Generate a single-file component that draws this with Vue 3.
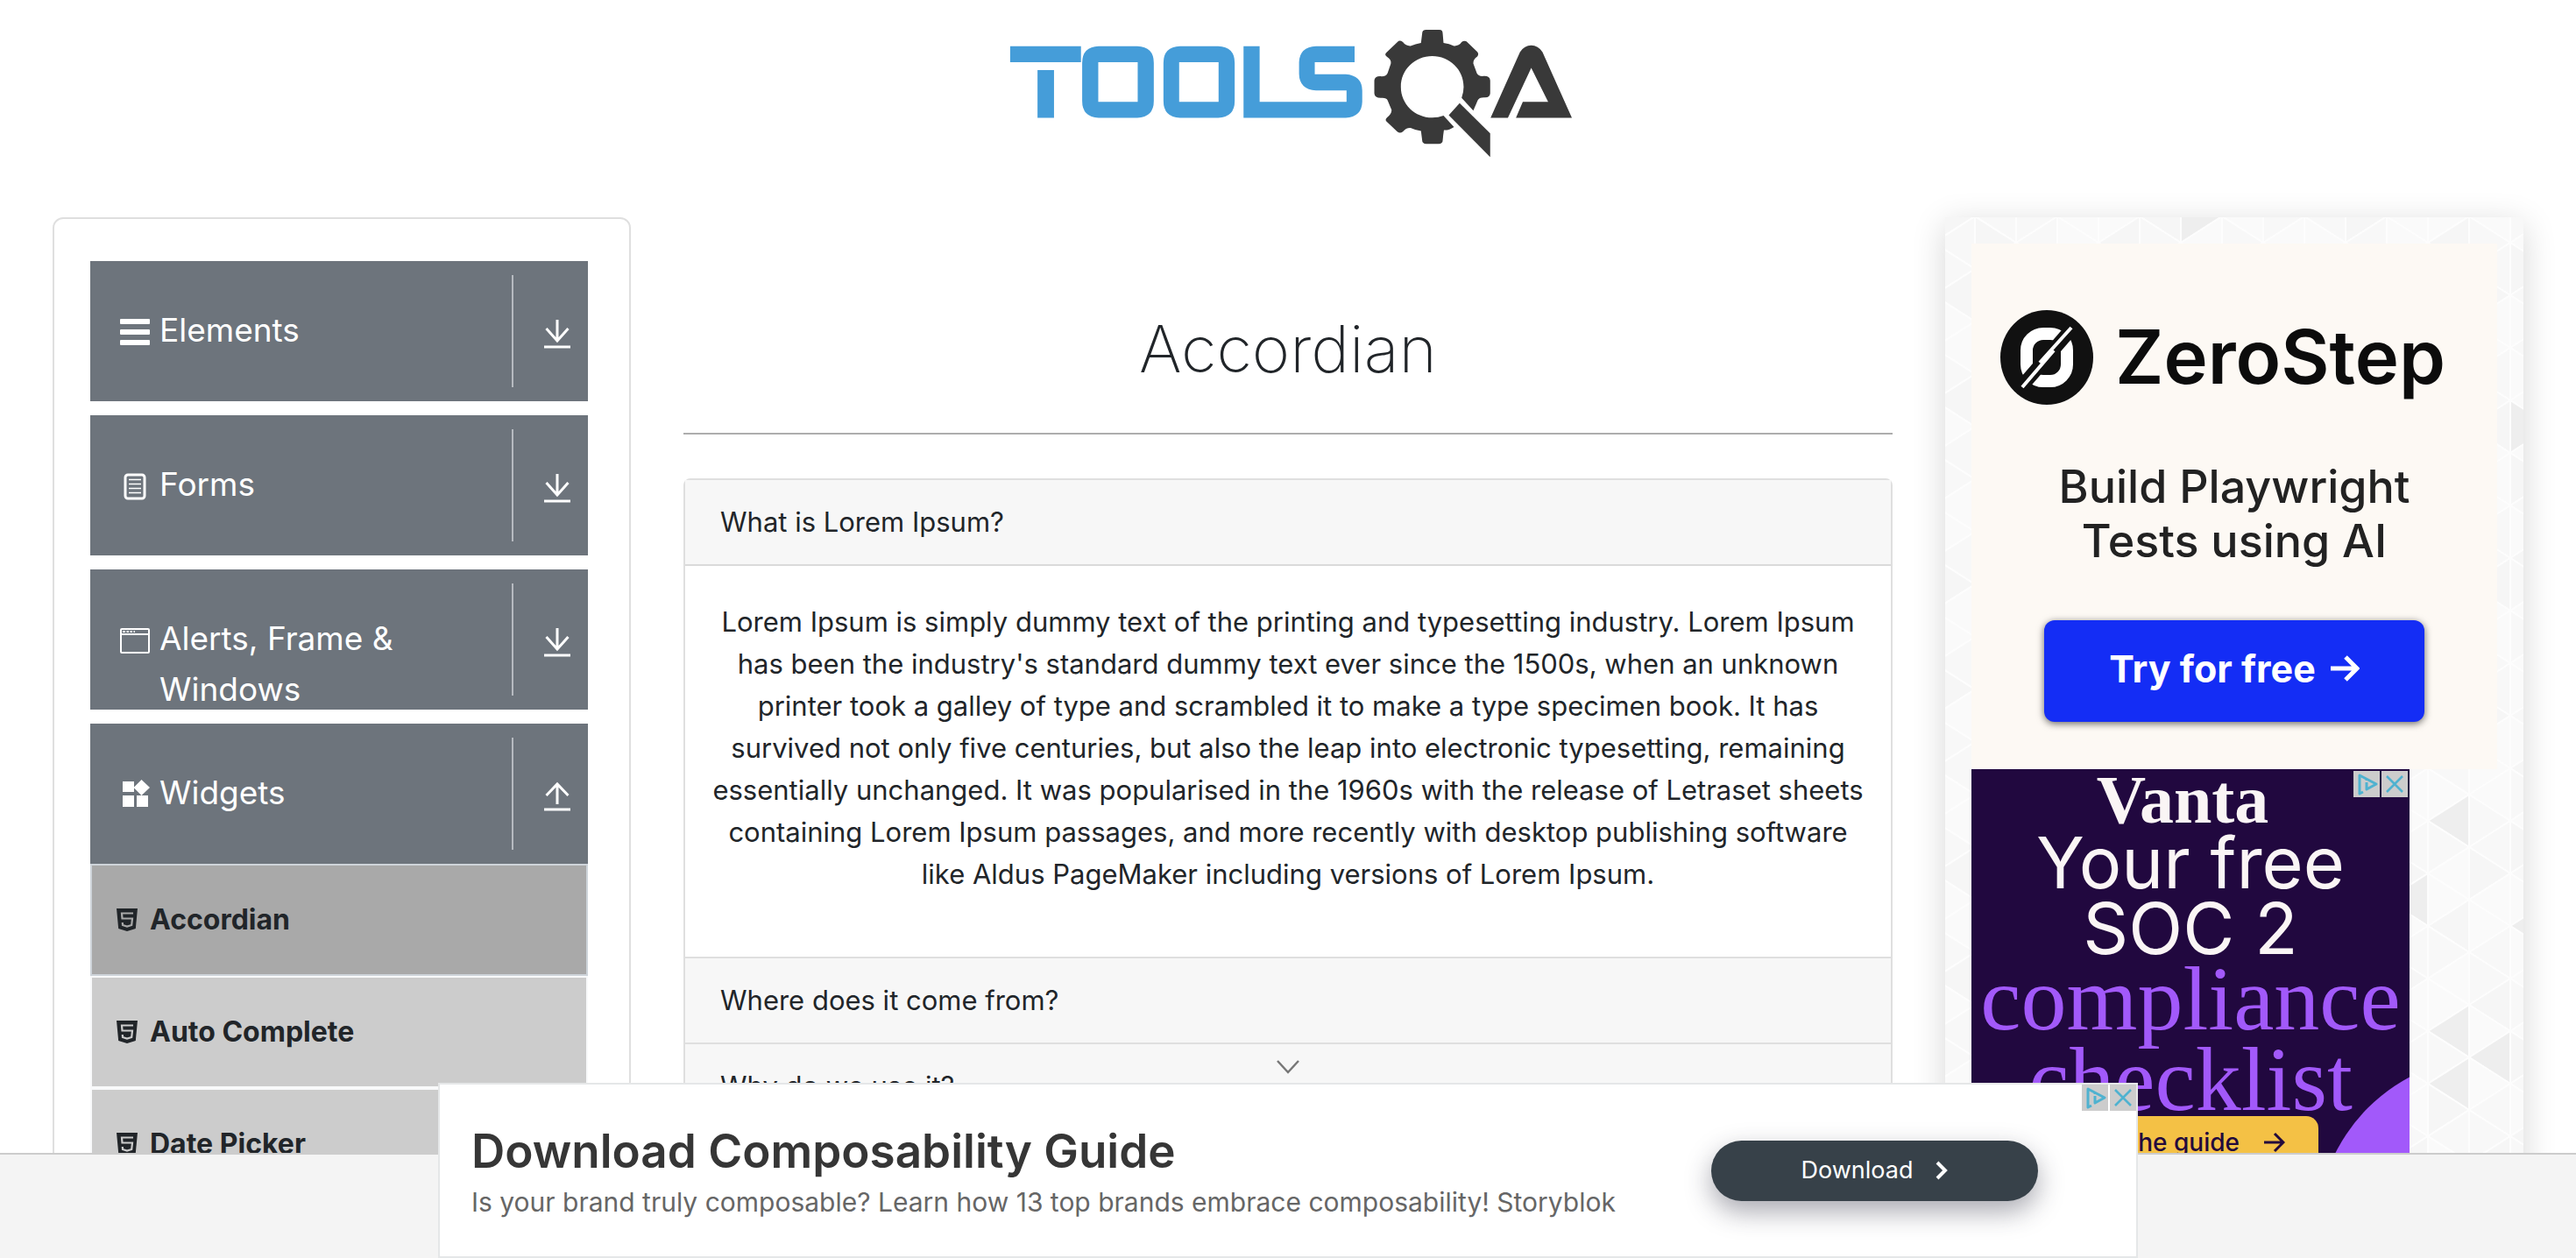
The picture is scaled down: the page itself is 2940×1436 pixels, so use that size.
<script setup>
import { ref } from 'vue'

const groups = [
  { name: 'Elements', icon: 'bars', open: false },
  { name: 'Forms', icon: 'form', open: false },
  { name: 'Alerts, Frame & Windows', icon: 'window', open: false },
  { name: 'Widgets', icon: 'widgets', open: true, items: ['Accordian', 'Auto Complete', 'Date Picker'] },
]
const current = 'Accordian'

const sections = [
  {
    title: 'What is Lorem Ipsum?',
    text: "Lorem Ipsum is simply dummy text of the printing and typesetting industry. Lorem Ipsum has been the industry's standard dummy text ever since the 1500s, when an unknown printer took a galley of type and scrambled it to make a type specimen book. It has survived not only five centuries, but also the leap into electronic typesetting, remaining essentially unchanged. It was popularised in the 1960s with the release of Letraset sheets containing Lorem Ipsum passages, and more recently with desktop publishing software like Aldus PageMaker including versions of Lorem Ipsum.",
  },
  { title: 'Where does it come from?' },
  { title: 'Why do we use it?' },
]
const openSection = ref(0)

// Triangular mosaic behind the promotions
const COL = 47
const SIDE = 60
const accents = new Set(['11,30', '12,31', '11,32', '11,22', '0,11', '0,7', '13,26', '10,25', '5,-1', '13,7', '0,31', '0,21'])
const triangles = []
for (let c = -1; c < 14; c++) {
  for (let r = -1; r < 44; r++) {
    const x = 34 + c * COL
    const y = 29 + (r * SIDE) / 2
    const pointsLeft = (c + r) % 2 !== 0
    const h = SIDE / 2
    const points = pointsLeft
      ? `${x},${y} ${x + COL},${y - h} ${x + COL},${y + h}`
      : `${x + COL},${y} ${x},${y - h} ${x},${y + h}`
    const seed = Math.abs((c * 37 + r * 91 + c * r * 17) % 11)
    const fill = accents.has(`${c},${r}`) ? '#eeeeee' : seed < 2 ? '#f6f6f6' : seed < 6 ? '#f8f8f8' : '#fafafa'
    triangles.push({ id: `${c},${r}`, points, fill })
  }
}
</script>

<template>
  <div class="page">
    <header class="top">
      <a href="#" aria-label="Home">
        <svg class="logo" viewBox="57 102 1411 434" preserveAspectRatio="none" aria-hidden="true">
          <g fill="#459dd9">
            <path d="M72 158H248V213H72ZM140 240H181V403H140Z" />
            <path fill-rule="evenodd" d="M292 158H388Q429 160 429 215V345Q429 400 388 403H292Q251 400 251 345V215Q251 160 292 158ZM291 213V348H389V213Z" />
            <path fill-rule="evenodd" d="M494 158H589Q630 160 630 215V345Q630 400 589 403H494Q453 400 453 345V215Q453 160 494 158ZM492 213V348H590V213Z" />
            <path d="M652 158H692V348H908V309H832Q791 306 790 253V213Q791 161 832 158H928V213H829V254H906Q946 258 947 309V348Q946 399 906 403H652Z" />
          </g>
          <g fill="#393939">
            <path fill-rule="evenodd" d="M1100 102H1139Q1147 102 1147 115L1149 147Q1163 150 1175 157Q1187 158 1194 144Q1200 138 1206 142L1232 176Q1238 184 1233 193Q1222 203 1223 217L1232 251Q1236 262 1249 260Q1264 259 1265 275V318Q1265 333 1252 333Q1237 332 1234 343L1223 378L1194 335Q1199 315 1199 297C1199 238 1164 192 1121 192C1078 192 1043 238 1043 297C1043 356 1078 402 1121 402Q1136 402 1149 395L1175 434Q1163 446 1150 445Q1148 462 1147 480Q1147 491 1137 492H1106Q1096 491 1096 480L1093 448Q1080 445 1067 437Q1056 436 1048 450Q1041 458 1034 450L1007 415Q1003 408 1009 401Q1020 390 1020 376L1010 343Q1007 333 993 335Q978 335 977 320V275Q978 260 993 261Q1007 262 1010 250L1018 218Q1020 205 1009 195Q1001 188 1007 180L1035 143Q1040 136 1048 144Q1056 158 1067 157Q1079 151 1093 147L1096 114Q1096 102 1106 102Z" />
            <path d="M1189 353L1265 456V537L1162 394Z" />
            <path d="M1266 403L1339 178Q1350 155 1367 155Q1384 155 1395 178L1468 403H1329L1346 348H1409L1367 232L1309 403Z" />
          </g>
        </svg>
      </a>
    </header>

    <div class="columns">
      <nav class="side" aria-label="Sections">
        <section v-for="g in groups" :key="g.name" class="group">
          <button class="group-head" type="button" :aria-expanded="g.open">
            <svg v-if="g.icon === 'bars'" class="gi" viewBox="0 0 36 36" fill="#fff"><rect x="1" y="3" width="34" height="6" rx="1" /><rect x="1" y="15" width="34" height="6" rx="1" /><rect x="1" y="27" width="34" height="6" rx="1" /></svg>
            <svg v-else-if="g.icon === 'form'" class="gi" viewBox="0 0 36 36" fill="none" stroke="#fff"><rect x="7" y="5" width="22" height="27" rx="3" stroke-width="3" /><path d="M11 10.500H25M11 15.500H25M11 20.500H25M11 25.500H25" stroke-width="1.500" /></svg>
            <svg v-else-if="g.icon === 'window'" class="gi" viewBox="0 0 36 36" fill="none" stroke="#fff"><rect x="2" y="5" width="32" height="27" rx="1" stroke-width="2" /><path d="M2 11H34" stroke-width="2" /><path d="M4 8H7M8.500 8H11M12.500 8H15M16.500 8H18" stroke-width="2" /></svg>
            <svg v-else class="gi" viewBox="0 0 36 36" fill="#fff"><path d="M4 3H17V15H4ZM4 19H17V32H4ZM20 19H33V32H20ZM25.500 1L35 10L25.500 19L16.500 10Z" /></svg>
            <span class="group-name">{{ g.name }}</span>
            <span class="arrow">
              <svg viewBox="0 0 30 34" fill="none" stroke="#fff" stroke-width="3">
                <path v-if="g.open" d="M15 26V4M2.500 16L15 3L27.500 16" />
                <path v-else d="M15 1V25M2.500 11L15 25L27.500 11" />
                <path d="M0 32H30" />
              </svg>
            </span>
          </button>
          <ul v-if="g.open" class="items">
            <li v-for="i in g.items" :key="i">
              <a href="#" :class="['item', { current: i === current }]">
                <svg viewBox="0 0 24 26"><path fill="#212529" d="M0 0H24L21.800 23L12 26L2.200 23Z" /><path class="five" fill="none" stroke-width="2.200" d="M19 5.500H6L6.500 11.500H18L17.200 19L12 20.500L7 19L6.800 16" /></svg>
                <span>{{ i }}</span>
              </a>
            </li>
          </ul>
        </section>
      </nav>

      <main class="main">
        <h1>Accordian</h1>
        <div class="accordion">
          <section v-for="(s, n) in sections" :key="s.title" class="card">
            <button class="card-head" type="button" :aria-expanded="openSection === n" @click="openSection = openSection === n ? -1 : n">{{ s.title }}</button>
            <div v-if="s.text && openSection === n" class="card-body">
              <p>{{ s.text }}</p>
            </div>
          </section>
        </div>
      </main>

      <aside class="promo">
        <svg class="mosaic" aria-hidden="true">
          <polygon v-for="t in triangles" :key="t.id" :points="t.points" :fill="t.fill" stroke="#fdfdfd" stroke-width="2" />
        </svg>
        <div class="zero">
          <div class="zero-brand">
            <svg viewBox="0 0 108 108" fill="none">
              <ellipse cx="54" cy="54" rx="53" ry="54" fill="#111" />
              <rect x="31" y="27" width="46" height="54" rx="19" stroke="#fff" stroke-width="14" />
              <path d="M22 91L86 17" stroke="#111" stroke-width="15" />
              <path d="M26 88L62 46M46 60L82 20" stroke="#fff" stroke-width="4" />
            </svg>
            <span>ZeroStep</span>
          </div>
          <p>Build Playwright<br />Tests using AI</p>
          <a class="try" href="#">
            Try for free
            <svg viewBox="0 0 34 30" fill="none" stroke="#fff" stroke-width="5"><path d="M1 15H30M18 2L31 15L18 28" /></svg>
          </a>
        </div>
        <div class="vanta">
          <div class="blob"></div>
          <strong>Vanta</strong>
          <span class="lead">Your free<br />SOC 2</span>
          <span class="lead-serif">compliance<br />checklist</span>
          <a class="guide" href="#">
            Get the guide
            <svg viewBox="0 0 24 24" fill="none" stroke="#230a3c" stroke-width="3"><path d="M0 12H22M12 2L22 12L12 22" /></svg>
          </a>
          <div class="choices">
            <button type="button" aria-label="Ad choices"><svg viewBox="0 0 30 30" fill="none" stroke="#4fb2d0" stroke-width="3" stroke-linejoin="round"><path d="M11 24L7 26V5L26 15L15 21V13M15 9V11" /></svg></button>
            <button type="button" aria-label="Close ad"><svg viewBox="0 0 30 30" fill="none" stroke="#4fb2d0" stroke-width="2.500"><path d="M6 6L24 24M24 6L6 24" /></svg></button>
          </div>
        </div>
      </aside>
    </div>

    <footer class="dock">
      <button class="collapse" type="button" aria-label="Hide ad">
        <svg viewBox="0 0 26 16" fill="none" stroke="#777" stroke-width="2.500"><path d="M1 1L13 14L25 1" /></svg>
      </button>
      <div class="banner">
        <div class="pitch">
          <h2>Download Composability Guide</h2>
          <p>Is your brand truly composable? Learn how 13 top brands embrace composability! Storyblok</p>
        </div>
        <a class="download" href="#">
          Download
          <svg viewBox="0 0 14 22" fill="none" stroke="#fff" stroke-width="4"><path d="M2 2L11 11L2 20" /></svg>
        </a>
        <div class="choices">
          <button type="button" aria-label="Ad choices"><svg viewBox="0 0 30 30" fill="none" stroke="#4fb2d0" stroke-width="3" stroke-linejoin="round"><path d="M11 24L7 26V5L26 15L15 21V13M15 9V11" /></svg></button>
          <button type="button" aria-label="Close ad"><svg viewBox="0 0 30 30" fill="none" stroke="#4fb2d0" stroke-width="2.500"><path d="M6 6L24 24M24 6L6 24" /></svg></button>
        </div>
      </div>
    </footer>
  </div>
</template>

<style>
body {
  margin: 0;
  background: #fff;
}
</style>

<style scoped>
.page {
  height: 100vh;
  overflow: hidden;
  font-family: Inter, "Liberation Sans", sans-serif;
  font-size: 31px;
  line-height: 48px;
  color: #212529;
}
.page *,
.page *::before {
  box-sizing: border-box;
}
svg {
  display: block;
  flex: none;
}
button {
  margin: 0;
  padding: 0;
  border: 0;
  background: none;
  font: inherit;
  color: inherit;
  text-align: left;
  cursor: pointer;
}
a {
  color: inherit;
  text-decoration: none;
}
.top {
  display: flex;
  justify-content: center;
  padding: 34px 0 69px;
}
.logo {
  width: 648px;
  height: 145px;
}
.columns {
  display: grid;
  grid-template-columns: minmax(0, 11fr) minmax(0, 23fr) minmax(0, 11fr);
  gap: 60px;
  padding: 0 60px;
}

/* sidebar */
.side {
  border: 2px solid #dfdfdf;
  border-radius: 12px;
  padding: 48px 47px 48px 41px;
  display: flex;
  flex-direction: column;
  gap: 16px;
}
.group-head {
  display: flex;
  gap: 10px;
  width: 100%;
  height: 160px;
  padding: 0 20px 0 33px;
  overflow: hidden;
  background: #6d747c;
  color: #fff;
  font-size: 37px;
  line-height: 58px;
}
.gi {
  width: 36px;
  height: 36px;
  margin-top: 63px;
}
.group-name {
  flex: 1;
  padding-top: 50px;
}
.arrow {
  display: flex;
  align-items: center;
  height: 128px;
  margin: 16px 0;
  padding: 5px 0 0 35px;
  border-left: 2px solid #b6bac0;
}
.arrow svg {
  width: 30px;
  height: 34px;
}
.items {
  margin: 0;
  padding: 0;
  list-style: none;
}
.item {
  display: flex;
  align-items: center;
  gap: 14px;
  height: 128px;
  padding: 0 28px;
  border: 2px solid #f8f9fa;
  background: #ccc;
  font-size: 32px;
  font-weight: 700;
}
.item svg {
  width: 24px;
  height: 26px;
}
.five {
  stroke: #ccc;
}
.current {
  border-color: #ced4da;
  background: #a9a9a9;
}
.current .five {
  stroke: #a9a9a9;
}

/* main column */
h1 {
  margin: 0 0 50px;
  padding: 100px 0 46px;
  border-bottom: 2px solid #adadad;
  font-size: 74px;
  line-height: 100px;
  font-weight: 200;
  text-align: center;
}
.card {
  border: 2px solid #dfdfdf;
  border-bottom: 0;
}
.card:first-child {
  border-radius: 8px 8px 0 0;
}
.card-head {
  display: block;
  width: 100%;
  padding: 24px 40px;
  background: #f7f7f7;
}
.card-body {
  padding: 40px 30px 70px;
  border-top: 2px solid #dadada;
  text-align: center;
}
.card-body p {
  margin: 0;
}

/* promotions */
.promo {
  position: relative;
  padding: 30px;
  background: #fafafa;
  box-shadow: 0 8px 36px rgba(0, 0, 0, 0.16);
}
.mosaic {
  position: absolute;
  inset: 0;
  width: 100%;
  height: 100%;
  overflow: hidden;
}
.zero {
  position: relative;
  height: 600px;
  padding-top: 76px;
  background: #fdf9f4;
  display: flex;
  flex-direction: column;
  align-items: center;
}
.zero-brand {
  display: flex;
  align-items: center;
  align-self: stretch;
  gap: 24px;
  padding-left: 32px;
  font-size: 85px;
  line-height: 108px;
  font-weight: 600;
  color: #0c0c0c;
}
.zero-brand svg {
  width: 108px;
  height: 108px;
}
.zero p {
  margin: 63px 0 59px;
  font-size: 52px;
  line-height: 62px;
  font-weight: 500;
  text-align: center;
  color: #222;
}
.try {
  display: flex;
  align-items: center;
  justify-content: center;
  gap: 16px;
  width: 434px;
  height: 116px;
  padding-bottom: 6px;
  border-radius: 12px;
  background: #142df5;
  box-shadow: 0 2px 8px rgba(0, 0, 0, 0.6);
  color: #fff;
  font-size: 43px;
  font-weight: 700;
}
.try svg {
  width: 34px;
  height: 30px;
}
.vanta {
  position: relative;
  width: 500px;
  height: 500px;
  overflow: hidden;
  background: #21083f;
  color: #faf5f5;
  display: flex;
  flex-direction: column;
  align-items: center;
}
.vanta strong {
  margin-right: 18px;
  font-family: "Liberation Serif", serif;
  font-size: 78px;
  line-height: 70px;
}
.lead {
  font-size: 81px;
  line-height: 75px;
  font-weight: 400;
  text-align: center;
}
.lead-serif {
  font-family: "Liberation Serif", serif;
  font-size: 104px;
  line-height: 92px;
  margin-top: -4px;
  text-align: center;
  color: #a259fa;
}
.guide {
  display: flex;
  align-items: center;
  justify-content: flex-end;
  gap: 28px;
  align-self: flex-start;
  width: 304px;
  height: 60px;
  margin: -4px 0 0 92px;
  padding-right: 38px;
  border-radius: 14px;
  background: #f4c145;
  color: #230a3c;
  font-size: 28px;
  font-weight: 500;
}
.guide svg {
  width: 24px;
  height: 24px;
}
.blob {
  position: absolute;
  left: 394px;
  top: 328px;
  width: 400px;
  height: 400px;
  border-radius: 50%;
  background: #a259fa;
}
.choices {
  position: absolute;
  top: 2px;
  right: 2px;
  display: flex;
  gap: 2px;
}
.choices button {
  width: 30px;
  height: 30px;
  background: #ccc;
}
.banner .choices {
  top: 0;
  right: 0;
}

/* bottom dock */
.dock {
  position: fixed;
  left: 0;
  right: 0;
  bottom: 0;
  display: flex;
  flex-direction: column;
  align-items: center;
}
.dock::before {
  content: "";
  position: absolute;
  left: 0;
  right: 0;
  bottom: 0;
  height: 120px;
  border-top: 2px solid #ccc;
  background: #f4f4f4;
}
.collapse {
  padding: 10px 20px;
}
.collapse svg {
  width: 26px;
  height: 16px;
}
.banner {
  position: relative;
  display: flex;
  align-items: center;
  width: 1940px;
  max-width: 100%;
  height: 200px;
  padding: 0 112px 0 36px;
  border: 2px solid #e5e7e8;
  background: #fff;
}
.pitch {
  flex: 1;
  padding-top: 4px;
}
h2 {
  margin: 0;
  font-size: 53px;
  line-height: 68px;
  font-weight: 600;
  color: #363636;
}
.pitch p {
  margin: 0;
  font-size: 30px;
  line-height: 48px;
  color: #666;
}
.download {
  display: flex;
  align-items: center;
  justify-content: center;
  gap: 26px;
  width: 373px;
  height: 69px;
  border-radius: 35px;
  background: #374149;
  box-shadow: 0 12px 30px rgba(40, 40, 60, 0.4);
  color: #fff;
  font-size: 27px;
}
.download svg {
  width: 14px;
  height: 22px;
}
</style>
